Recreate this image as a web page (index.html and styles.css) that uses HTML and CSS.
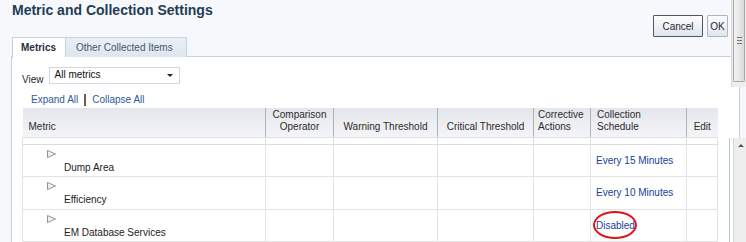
FILE: index.html
```html
<html lang="en">
<head>
    <meta charset="UTF-8">
    <title>Metric and Collection Settings</title>
    <link rel="stylesheet" href="styles.css">
</head>
<body>
<div class="window">
    <div class="head">
        <h1 class="title">Metric and Collection Settings</h1>
        <div class="actions">
            <button type="button" class="btn btn-focus">Cancel</button>
            <button type="button" class="btn btn-ok">OK</button>
        </div>
    </div>

    <div class="tabs">
        <span class="tab tab-active">Metrics</span>
        <span class="tab">Other Collected Items</span>
    </div>

    <div class="panel">
        <div class="view-row">
            <span class="view-label">View</span>
            <div class="select">All metrics<span class="caret"></span></div>
        </div>

        <div class="links">
            <a href="#">Expand All</a>
            <span class="sep"></span>
            <a href="#">Collapse All</a>
        </div>

        <div class="grid">
            <table class="metrics">
                <colgroup>
                    <col style="width:243px">
                    <col style="width:68px">
                    <col style="width:104px">
                    <col style="width:96px">
                    <col style="width:57px">
                    <col style="width:96px">
                    <col style="width:31px">
                </colgroup>
                <tr class="hdr">
                    <th class="c-metric">Metric</th>
                    <th class="c-center">Comparison<br>Operator</th>
                    <th class="c-center">Warning Threshold</th>
                    <th class="c-center">Critical Threshold</th>
                    <th class="c-left">Corrective<br>Actions</th>
                    <th class="c-sched">Collection<br>Schedule</th>
                    <th class="c-center">Edit</th>
                </tr>
                <tr class="spacer">
                    <td></td><td></td><td></td><td></td><td></td><td></td><td></td>
                </tr>
                <tr class="row">
                    <td class="name-cell">
                        <svg class="disclose" width="9" height="8" viewBox="0 0 9 8"><polygon points="0.5,0.5 8.5,4 0.5,7.5" fill="#eef0f2" stroke="#8b939b"/></svg>
                        <span class="name">Dump Area</span>
                    </td>
                    <td></td><td></td><td></td><td></td>
                    <td class="sched"><a href="#">Every 15 Minutes</a></td>
                    <td></td>
                </tr>
                <tr class="row">
                    <td class="name-cell">
                        <svg class="disclose" width="9" height="8" viewBox="0 0 9 8"><polygon points="0.5,0.5 8.5,4 0.5,7.5" fill="#eef0f2" stroke="#8b939b"/></svg>
                        <span class="name">Efficiency</span>
                    </td>
                    <td></td><td></td><td></td><td></td>
                    <td class="sched"><a href="#">Every 10 Minutes</a></td>
                    <td></td>
                </tr>
                <tr class="row">
                    <td class="name-cell">
                        <svg class="disclose" width="9" height="8" viewBox="0 0 9 8"><polygon points="0.5,0.5 8.5,4 0.5,7.5" fill="#eef0f2" stroke="#8b939b"/></svg>
                        <span class="name">EM Database Services</span>
                    </td>
                    <td></td><td></td><td></td><td></td>
                    <td class="sched"><span class="marked"><a href="#">Disabled</a><span class="ring"></span></span></td>
                    <td></td>
                </tr>
            </table>
            <div class="inner-scroll">
                <div class="track"><span class="arrow"></span></div>
            </div>
        </div>
    </div>

    <div class="page-scroll">
        <div class="thumb"><span class="grip"></span></div>
    </div>
</div>
</body>
</html>
```

FILE: styles.css
```css
body {
    margin: 0;
    background: #f6f8fb;
    font-family: "Liberation Sans", Arial, sans-serif;
    font-size: 10px;
    color: #1c1c1c;
    overflow: hidden;
}

a {
    color: #21409a;
    text-decoration: none;
}

.window {
    position: relative;
    width: 746px;
    height: 242px;
    overflow: hidden;
}

/* title + buttons */
.head {
    display: flex;
    justify-content: space-between;
    height: 37px;
    padding: 0 18px 0 12px;
}

.title {
    margin: 0;
    padding-top: 2px;
    font-size: 14px;
    line-height: 17px;
    font-weight: bold;
    color: #1f3d55;
}

.actions {
    display: flex;
    gap: 4px;
    margin-top: 15px;
}

.btn {
    height: 22px;
    padding: 0;
    font-family: "Liberation Sans", Arial, sans-serif;
    font-size: 10px;
    color: #1f2b37;
    background: linear-gradient(#fdfdfe, #dfe5ec);
    border: 1px solid #a9b5c2;
    border-radius: 1px;
}

.btn-focus {
    width: 50px;
    border-color: #4c5864;
}

.btn-ok {
    width: 21px;
}

/* tabs */
.tabs {
    display: flex;
    padding-left: 12px;
    height: 20px;
    margin-bottom: -1px;
    position: relative;
    z-index: 1;
}

.tab {
    padding: 0 10px;
    line-height: 19px;
    border: 1px solid #c6d2df;
    border-bottom: none;
    background: linear-gradient(#e9eff6, #dde6f0);
    color: #4b5866;
}

.tab-active {
    width: 35px;
    padding: 0 9px 0 8px;
    background: #fff;
    font-weight: bold;
    color: #1f2f40;
    border-right: none;
    height: 20px;
}

.tab + .tab {
    width: 100px;
    padding: 0 10px;
}

/* panel */
.panel {
    margin-left: 11px;
    width: 717px;
    height: 186px;
    background: #fff;
    border: 1px solid #c6d2df;
    border-bottom: none;
    padding-left: 10px;
}

.view-row {
    display: flex;
    margin-top: 10px;
    height: 17px;
}

.view-label {
    padding-top: 7px;
    color: #2a2a2a;
}

.select {
    position: relative;
    margin-left: 5px;
    width: 124px;
    height: 15px;
    line-height: 14px;
    padding-left: 5px;
    border: 1px solid #d3d8de;
    color: #111;
}

.caret {
    position: absolute;
    right: 6px;
    top: 6px;
    border-left: 3px solid transparent;
    border-right: 3px solid transparent;
    border-top: 3px solid #222;
}

.links {
    display: flex;
    align-items: center;
    gap: 5px;
    padding: 9px 0 2px 9px;
    height: 13px;
    line-height: 13px;
}

.links a {
    color: #2c5a94;
}

.sep {
    width: 2px;
    height: 12px;
    margin: 0 1px;
    background: #6f5d45;
}

/* table */
.grid {
    display: flex;
    width: 724px;
}

.metrics {
    width: 695px;
    border-collapse: collapse;
    table-layout: fixed;
    font-family: "Liberation Sans", Arial, sans-serif;
    font-size: 10px;
    color: #1c1c1c;
}

.hdr th {
    height: 29px;
    padding: 0 4px 4px;
    vertical-align: bottom;
    font-weight: normal;
    line-height: 12px;
    color: #2b2b2b;
    background: linear-gradient(#e3e6eb, #f4f5f7);
    border-left: 1px solid #adb4bc;
    border-bottom: 1px solid #dde1e5;
}

.hdr th:first-child {
    border-left: none;
}

.hdr .c-metric {
    text-align: left;
    padding-left: 6px;
}

.hdr .c-center {
    text-align: center;
}

.hdr .c-left {
    text-align: left;
    padding-left: 4px;
}

.hdr .c-sched {
    text-align: left;
    padding-left: 6px;
}

.spacer td {
    height: 7px;
    padding: 0;
    border-left: 1px solid #e3e3e3;
    border-right: 1px solid #e3e3e3;
    border-bottom: 1px solid #dcdcdc;
}

.row td {
    height: 32.5px;
    padding: 0;
    border: 1px solid #e3e3e3;
}

.row td.name-cell {
    vertical-align: top;
    padding-top: 5px;
}

.disclose {
    display: block;
    margin-left: 24px;
}

.name {
    display: block;
    margin-left: 41px;
    margin-top: 3px;
    line-height: 13px;
}

.row td.sched {
    padding-left: 5px;
    vertical-align: middle;
}

.marked {
    position: relative;
}

.ring {
    position: absolute;
    left: -3px;
    top: -9px;
    width: 40px;
    height: 24px;
    border: 2px solid #e0151a;
    border-radius: 50%;
}

.inner-scroll {
    display: flex;
    margin: 30px 0 0 11px;
    width: 17px;
    border-left: 1px solid #b3c6dc;
    background: #fff;
}

.track {
    position: relative;
    margin-left: 3px;
    width: 14px;
    background: #eeeeee;
    border-left: 1px solid #d6d6d6;
}

.arrow {
    position: absolute;
    left: 4px;
    top: 6px;
    border-left: 3px solid transparent;
    border-right: 3px solid transparent;
    border-bottom: 3px solid #555;
}

.page-scroll {
    position: absolute;
    right: 0;
    top: 0;
    width: 14px;
    height: 87px;
    background: #eeeeee;
    border-left: 1px solid #d8d8d8;
}

.thumb {
    position: relative;
    height: 81px;
    margin: 0 1px;
    background: linear-gradient(to right, #f3f3f3, #dadada);
    border: 1px solid #a7a7a7;
    border-top: none;
    border-radius: 0 0 2px 2px;
}

.grip {
    position: absolute;
    left: 3px;
    top: 37px;
    width: 5px;
    height: 5px;
    border-top: 1px solid #777;
    border-bottom: 1px solid #777;
}

.grip::after {
    content: "";
    position: absolute;
    left: 0;
    top: 2px;
    width: 5px;
    border-top: 1px solid #777;
}
```
